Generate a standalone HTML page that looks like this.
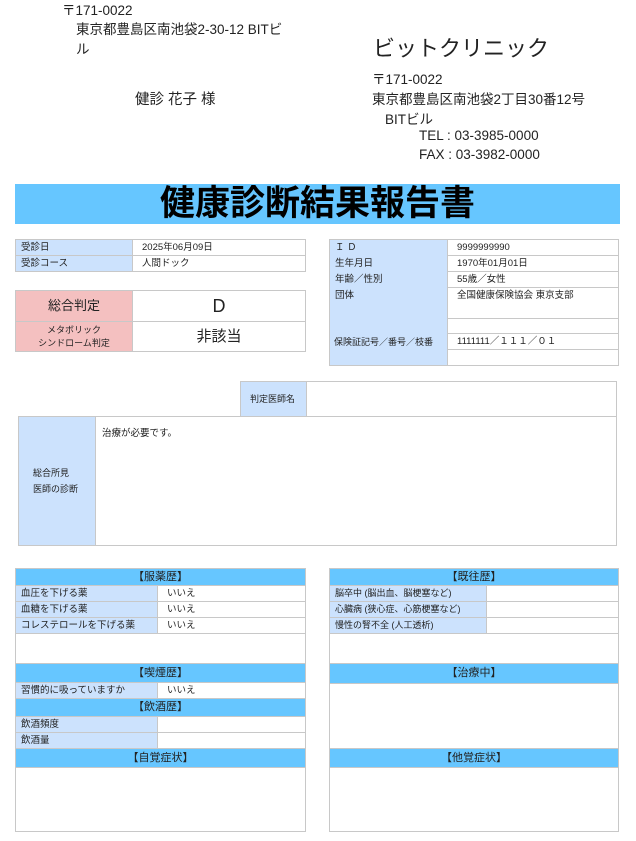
<!DOCTYPE html>
<html><head><meta charset="utf-8"><style>
*{margin:0;padding:0;box-sizing:border-box}
body{width:636px;height:841px;background:#fff;position:relative;overflow:hidden;font-family:"Liberation Sans","Noto Sans CJK JP",sans-serif;color:#222}
.a{position:absolute;white-space:nowrap}
.c{position:absolute;border:1px solid #c8c8c8;font-size:9.5px;line-height:15px;padding-left:5px;white-space:nowrap;overflow:hidden}
.v{padding-left:9px}
.l{background:#cce2fd}
.p{background:#f4c0c0}
.h{position:absolute;background:#66c6ff;text-align:center;font-size:11px;border:1px solid #c8c8c8}
</style></head><body>
<div class="a" style="left:62px;top:-1px;font-size:13.5px">〒171-0022</div>
<div class="a" style="left:76px;top:18px;font-size:13.5px">東京都豊島区南池袋2-30-12 BITビ</div>
<div class="a" style="left:76px;top:38px;font-size:13.5px">ル</div>
<div class="a" style="left:135px;top:88px;font-size:14.5px">健診 花子 様</div>
<div class="a" style="left:373px;top:31px;font-size:22px">ビットクリニック</div>
<div class="a" style="left:372px;top:68px;font-size:13.5px">〒171-0022</div>
<div class="a" style="left:372px;top:88px;font-size:13.5px">東京都豊島区南池袋2丁目30番12号</div>
<div class="a" style="left:385px;top:108px;font-size:13.5px">BITビル</div>
<div class="a" style="left:419px;top:128px;font-size:13.5px">TEL : 03-3985-0000</div>
<div class="a" style="left:419px;top:147px;font-size:13.5px">FAX : 03-3982-0000</div>
<div class="a" style="left:15px;top:184px;width:605px;height:40px;background:#66c6ff;text-align:center;font-size:35px;line-height:40px;font-weight:bold;color:#000">健康診断結果報告書</div>

<div class="c l" style="left:15px;top:239px;width:118px;height:17px">受診日</div>
<div class="c v" style="left:132px;top:239px;width:174px;height:17px">2025年06月09日</div>
<div class="c l" style="left:15px;top:255px;width:118px;height:17px">受診コース</div>
<div class="c v" style="left:132px;top:255px;width:174px;height:17px">人間ドック</div>

<div class="c p" style="left:15px;top:290px;width:118px;height:32px;text-align:center;font-size:13px;line-height:30px;padding:0">総合判定</div>
<div class="c" style="left:132px;top:290px;width:174px;height:32px;text-align:center;font-size:18px;line-height:30px;padding:0">D</div>
<div class="c p" style="left:15px;top:321px;width:118px;height:31px;text-align:center;font-size:9px;line-height:13px;padding:2px 0 0">メタボリック<br>シンドローム判定</div>
<div class="c" style="left:132px;top:321px;width:174px;height:31px;text-align:center;font-size:15px;line-height:29px;padding:0">非該当</div>

<div class="c l" style="left:329px;top:239px;width:119px;height:127px;line-height:16px">Ｉ Ｄ<br>生年月日<br>年齢／性別<br>団体</div>
<div class="a" style="left:334px;top:335px;font-size:9px">保険証記号／番号／枝番</div>
<div class="c v" style="left:447px;top:239px;width:172px;height:17px">9999999990</div>
<div class="c v" style="left:447px;top:255px;width:172px;height:17px">1970年01月01日</div>
<div class="c v" style="left:447px;top:271px;width:172px;height:17px">55歳／女性</div>
<div class="c v" style="left:447px;top:287px;width:172px;height:32px">全国健康保険協会 東京支部</div>
<div class="c" style="left:447px;top:318px;width:172px;height:16px"></div>
<div class="c v" style="left:447px;top:333px;width:172px;height:17px">1111111／１１１／０１</div>
<div class="c" style="left:447px;top:349px;width:172px;height:17px"></div>

<div class="c l" style="left:240px;top:381px;width:67px;height:36px;line-height:34px;font-size:9px;padding-left:9px">判定医師名</div>
<div class="c" style="left:306px;top:381px;width:311px;height:36px"></div>
<div class="c l" style="left:18px;top:416px;width:78px;height:130px;padding:48px 0 0 14px;font-size:9px;line-height:16px">総合所見<br>医師の診断</div>
<div class="c" style="left:95px;top:416px;width:522px;height:130px;padding:9px 0 0 6px">治療が必要です。</div>

<div class="c" style="left:15px;top:568px;width:291px;height:96px"></div>
<div class="h" style="left:15px;top:568px;width:291px;height:18px;line-height:16px">【服薬歴】</div>
<div class="c l" style="left:15px;top:585px;width:143px;height:17px">血圧を下げる薬</div>
<div class="c v" style="left:157px;top:585px;width:149px;height:17px">いいえ</div>
<div class="c l" style="left:15px;top:601px;width:143px;height:17px">血糖を下げる薬</div>
<div class="c v" style="left:157px;top:601px;width:149px;height:17px">いいえ</div>
<div class="c l" style="left:15px;top:617px;width:143px;height:17px">コレステロールを下げる薬</div>
<div class="c v" style="left:157px;top:617px;width:149px;height:17px">いいえ</div>
<div class="h" style="left:15px;top:663px;width:291px;height:20px;line-height:18px">【喫煙歴】</div>
<div class="c l" style="left:15px;top:682px;width:143px;height:17px">習慣的に吸っていますか</div>
<div class="c v" style="left:157px;top:682px;width:149px;height:17px">いいえ</div>
<div class="h" style="left:15px;top:698px;width:291px;height:19px;line-height:17px">【飲酒歴】</div>
<div class="c l" style="left:15px;top:716px;width:143px;height:17px">飲酒頻度</div>
<div class="c" style="left:157px;top:716px;width:149px;height:17px"></div>
<div class="c l" style="left:15px;top:732px;width:143px;height:17px">飲酒量</div>
<div class="c" style="left:157px;top:732px;width:149px;height:17px"></div>
<div class="c" style="left:15px;top:748px;width:291px;height:84px"></div>
<div class="h" style="left:15px;top:748px;width:291px;height:20px;line-height:18px">【自覚症状】</div>

<div class="c" style="left:329px;top:568px;width:290px;height:264px"></div>
<div class="h" style="left:329px;top:568px;width:290px;height:18px;line-height:16px">【既往歴】</div>
<div class="c l" style="left:329px;top:585px;width:158px;height:17px;font-size:9px">脳卒中 (脳出血、脳梗塞など)</div>
<div class="c" style="left:486px;top:585px;width:133px;height:17px"></div>
<div class="c l" style="left:329px;top:601px;width:158px;height:17px;font-size:9px">心臓病 (狭心症、心筋梗塞など)</div>
<div class="c" style="left:486px;top:601px;width:133px;height:17px"></div>
<div class="c l" style="left:329px;top:617px;width:158px;height:17px;font-size:9px">慢性の腎不全 (人工透析)</div>
<div class="c" style="left:486px;top:617px;width:133px;height:17px"></div>
<div class="h" style="left:329px;top:663px;width:290px;height:21px;line-height:19px">【治療中】</div>
<div class="h" style="left:329px;top:748px;width:290px;height:20px;line-height:18px">【他覚症状】</div>
</body></html>
